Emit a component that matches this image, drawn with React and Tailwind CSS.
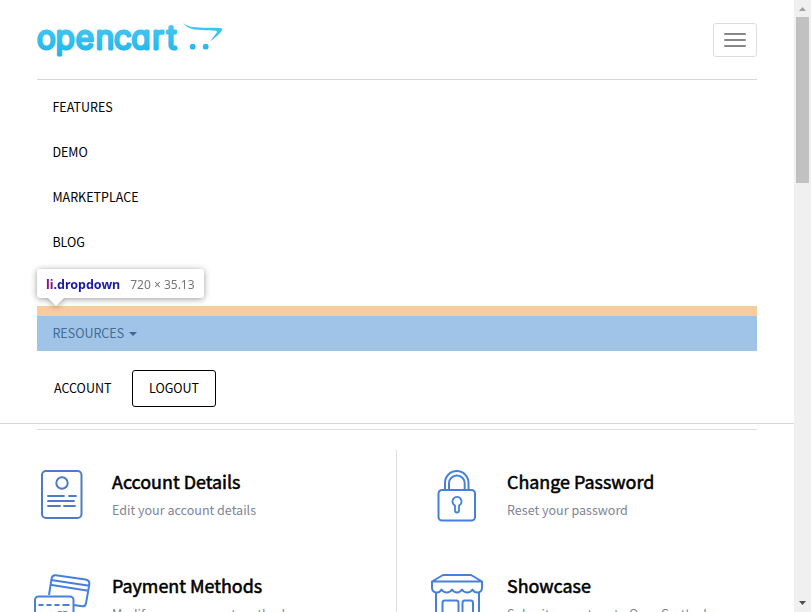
const NAV = ["FEATURES", "DEMO", "MARKETPLACE", "BLOG"];

function Logo() {
  return (
    <svg className="block h-[40px] w-[188px] overflow-visible" viewBox="0 0 188 40" role="img" aria-label="opencart">
      <defs>
        <linearGradient id="brand" gradientUnits="userSpaceOnUse" x1="0" y1="4" x2="0" y2="36">
          <stop offset="0" stopColor="#44c8f2" />
          <stop offset="1" stopColor="#1fb4ea" />
        </linearGradient>
      </defs>
      <text
        x="0 18.8 38.7 58.8 76.9 94.4 115.2 129.9"
        y="27.7"
        fill="url(#brand)"
        stroke="url(#brand)"
        strokeWidth="3.100"
        strokeLinejoin="round"
        className="font-['Inter',sans-serif] text-[31.500px] font-light [font-feature-settings:'cv11']"
      >
        opencart
      </text>
      <path
        d="M145.800 0.800C149 5.800 154 5.800 162 6.500C172 7.300 181 6.100 184.600 7.500C186.300 8.300 184.300 10.800 181.800 13.300C179.300 15.800 176.300 17.800 173.300 20.300C175.300 16.800 177.800 14.300 179.800 11.500C181.300 9.200 175 9.700 168 9.300C158 8.800 149.500 8.800 145.800 0.800Z"
        fill="url(#brand)"
      />
      <circle cx="155.700" cy="25.700" r="2.900" fill="url(#brand)" />
      <circle cx="168.700" cy="25.700" r="2.900" fill="url(#brand)" />
    </svg>
  );
}

function AccountIcon() {
  return (
    <svg className="h-[60px] w-[60px]" viewBox="0 0 60 60" fill="none" stroke="#4d7cc4" strokeWidth="2" strokeLinecap="round">
      <rect x="10" y="6" width="39.500" height="47" rx="4" />
      <circle cx="30" cy="18" r="5.700" />
      <path d="M16 31H32M37 31H44M16 36H42M16 41H28M32 41H43" strokeWidth="1.800" />
    </svg>
  );
}

function LockIcon() {
  return (
    <svg className="h-[60px] w-[60px]" viewBox="0 0 60 60" fill="none" stroke="#4680dc" strokeWidth="2" strokeLinejoin="round">
      <rect x="11.500" y="25" width="36.500" height="30.500" rx="3.500" />
      <path d="M18 25V17.750a11.750 11.750 0 0 1 23.500 0V25M22 25V18.250a7.850 7.850 0 0 1 15.700 0V25" />
      <path d="M28 40.500A4.500 4.500 0 1 1 32 40.500V45.500a2 2 0 0 1-4 0Z" strokeWidth="1.800" />
    </svg>
  );
}

function CardsIcon() {
  return (
    <svg className="h-[60px] w-[60px]" viewBox="0 0 60 60" fill="none" stroke="#4680dc" strokeWidth="2" strokeLinejoin="round">
      <path d="M17 26L19.600 9.500Q20.300 5.700 23.800 6.200L53.500 10.500Q58 11.300 57.300 15.500L54 34.300Q53.300 37.800 50 37.300L42 36.100M19 11L57.300 16.800M18.200 15.800L56.200 21.700" />
      <rect x="3" y="27.500" width="38.500" height="28" rx="3.500" />
      <path d="M6.500 36H11.500M14.500 36H19.500M22.500 36H27.500M30.500 36H37.500M25.500 45.500a2.500 2.500 0 1 1 5 0a2.500 2.500 0 1 1 5 0" strokeWidth="1.800" />
    </svg>
  );
}

function StoreIcon() {
  return (
    <svg className="h-[60px] w-[60px]" viewBox="0 0 60 60" fill="none" stroke="#4680dc" strokeWidth="2" strokeLinejoin="round">
      <path d="M5 12.500L16 6H44L55 12.500ZM5 12.500V18.500C5 24.500 12 25 14.500 20.500C17 24.500 22.500 24.500 25 20.500C27.500 24.500 32.500 24.500 35 20.500C37.500 24.500 43 24.500 45.500 20.500C48 25 55 24.500 55 18.500V12.500M9 24V58M52 24V58" />
      <path d="M15.500 58V34Q15.500 31.500 17.500 31.500H29.500Q31.500 31.500 31.500 34V58M35.500 58V34Q35.500 31.500 37.500 31.500H44Q46 31.500 46 34V58" />
    </svg>
  );
}

function Tile({ icon, title, text }) {
  return (
    <div className="flex h-[104px]">
      <div className="w-[80px] shrink-0 pt-px">{icon}</div>
      <div className="pt-[3px]">
        <h3 className="text-[17.900px] leading-[28px] whitespace-nowrap text-black [-webkit-text-stroke:0.55px_#000]">{title}</h3>
        <p className="mt-[5px] text-[12.550px] leading-[20px] whitespace-nowrap text-[#808594]">{text}</p>
      </div>
    </div>
  );
}

function Scrollbar() {
  return (
    <div className="flex h-[612px] w-[17px] shrink-0 flex-col items-center bg-[#f0f0f0]">
      <svg className="h-[17px] w-[17px] shrink-0" viewBox="0 0 17 17">
        <path d="M5 11L8.500 7L12 11Z" fill="#a0a0a0" />
      </svg>
      <div className="h-[166px] w-[13px] bg-[#c1c1c1]" />
      <svg className="mt-auto h-[17px] w-[17px] shrink-0" viewBox="0 0 17 17">
        <path d="M5 6L8.500 10L12 6Z" fill="#505050" />
      </svg>
    </div>
  );
}

export default function App() {
  return (
    <div className="flex h-[612px] w-[811px] overflow-hidden bg-white font-['Noto_Sans_CJK_SC',sans-serif] text-[12.500px] text-black">
      <div className="h-[612px] w-[794px] overflow-hidden">
        <header className="h-[424px] border-b border-[#d6d6d6] px-[37px]">
          <div className="flex h-[80px] items-start justify-between border-b border-[#d6d6d6]">
            <div className="pt-[21px]">
              <Logo />
            </div>
            <button className="mt-[23px] flex h-[34px] w-[44px] flex-col items-center justify-center gap-[4px] rounded-[3px] border border-[#ddd]">
              <span className="h-[2px] w-[22px] rounded-[1px] bg-[#888]" />
              <span className="h-[2px] w-[22px] rounded-[1px] bg-[#888]" />
              <span className="h-[2px] w-[22px] rounded-[1px] bg-[#888]" />
            </button>
          </div>

          <nav className="pt-[5px]">
            {NAV.map((label) => (
              <a key={label} className="flex h-[45px] items-center pl-[15.400px]">
                {label}
              </a>
            ))}
            <div className="relative mt-[41px] h-[45px] border-t-[10px] border-[#f9cc9d] bg-[#a0c4e8]">
              <a className="flex h-[35px] items-center gap-[5px] pl-[15.400px] text-[#456c96]">
                RESOURCES
                <span className="h-0 w-0 border-x-4 border-t-4 border-x-transparent border-t-[#3f6791]" />
              </a>
              <div className="absolute top-[-47px] left-0 flex h-[29px] w-[167px] items-center rounded-[3px] bg-white pt-[3px] pl-[9px] font-['Noto_Sans',sans-serif] text-[12px] drop-shadow-[0_1px_3px_rgba(0,0,0,0.4)]">
                <span className="text-[12.500px] font-bold text-[#881280]">li</span>
                <span className="text-[12.500px] font-bold text-[#1a1aa6]">.dropdown</span>
                <span className="ml-[10px] whitespace-nowrap text-[#777]">720 × 35.13</span>
                <span className="absolute top-[29px] left-[11px] h-0 w-0 border-x-8 border-t-8 border-x-transparent border-t-white" />
              </div>
            </div>
          </nav>

          <div className="flex items-center pt-[19px] pl-[17px]">
            <a className="w-[78px]">ACCOUNT</a>
            <a className="flex h-[37px] w-[84px] items-center justify-center rounded-[3px] border border-black">LOGOUT</a>
          </div>
        </header>

        <main className="mx-[37px] mt-[5px] border-t border-[#ddd] pt-[20px]">
          <div className="flex">
            <section className="w-[360px] border-r border-[#ddd] pt-[14px]">
              <div className="-ml-[5px]">
                <Tile icon={<AccountIcon />} title="Account Details" text="Edit your account details" />
                <Tile icon={<CardsIcon />} title="Payment Methods" text="Modify your payment methods" />
              </div>
            </section>
            <section className="pt-[14px] pl-[30px]">
              <Tile icon={<LockIcon />} title="Change Password" text="Reset your password" />
              <Tile icon={<StoreIcon />} title="Showcase" text="Submit your store to OpenCart's showcase" />
            </section>
          </div>
        </main>
      </div>
      <Scrollbar />
    </div>
  );
}
